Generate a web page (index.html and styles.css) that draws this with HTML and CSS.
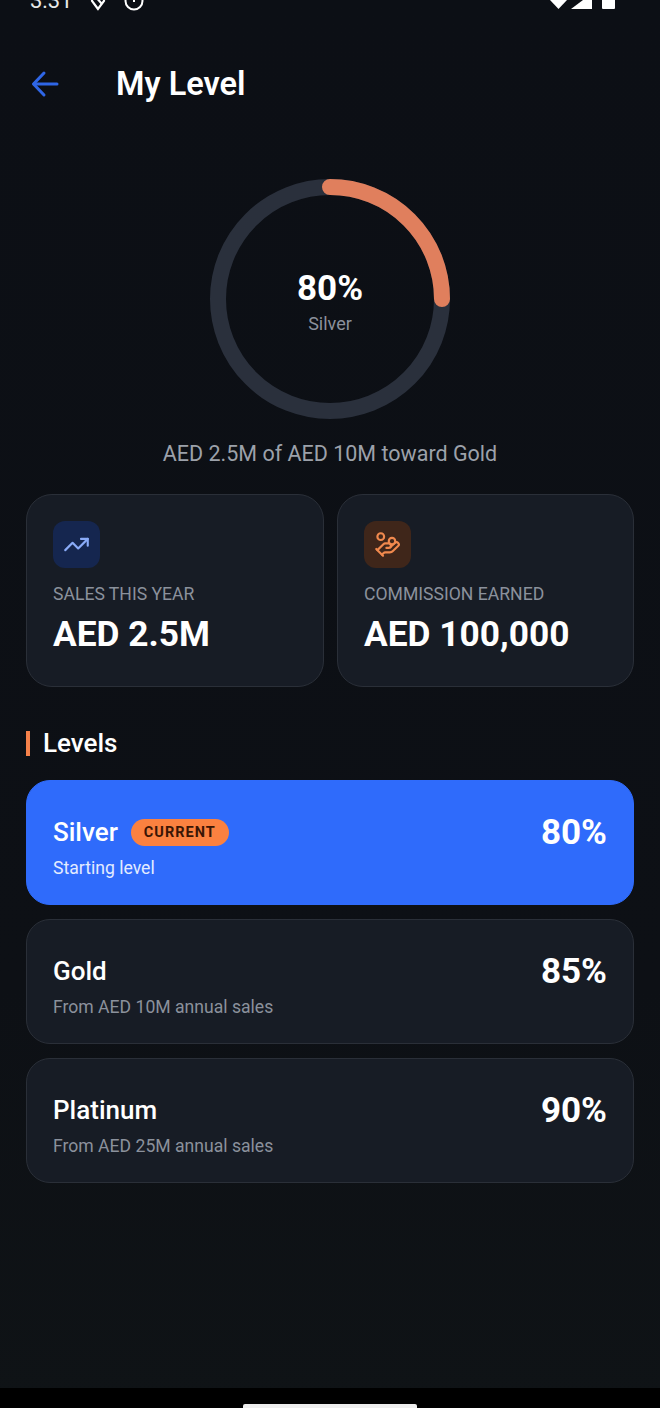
FILE: index.html
```html
<!DOCTYPE html>
<html lang="en">

<head>
    <meta charset="UTF-8">
    <meta name="viewport" content="width=device-width, initial-scale=1.0">
    <title>My Level</title>
    <link rel="stylesheet" href="styles.css">
</head>

<body>
    <div class="screen">
        <div class="status-bar">
            <div class="status-left">
                <span class="status-time">3:31</span>
                <svg class="status-icon" width="20" height="20" viewBox="0 0 20 20" fill="none" stroke="#fff" stroke-width="2.2">
                    <path d="M10 18 4 10V3h12v7z" />
                    <path d="M6 4l8 9" />
                </svg>
                <svg class="status-icon" width="20" height="20" viewBox="0 0 20 20" fill="none" stroke="#fff" stroke-width="2">
                    <circle cx="10" cy="10" r="8.5" />
                    <path d="M10 6v5" />
                </svg>
            </div>
            <div class="status-right">
                <svg width="17" height="14" viewBox="0 0 17 14"><path d="M0 0h17L8.500 9z" fill="#fff" /></svg>
                <svg class="status-cell" width="21" height="14" viewBox="0 0 21 14"><path d="M21 0v9H0L12 0z" fill="#fff" /></svg>
                <svg class="status-battery" width="13" height="14" viewBox="0 0 13 14"><path d="M0 0h13v8a1 1 0 0 1-1 1H1a1 1 0 0 1-1-1z" fill="#fff" /></svg>
            </div>
        </div>

        <header class="top-bar">
            <svg class="back-icon" width="28" height="28" viewBox="0 0 28 28" fill="none" stroke="#2f66e6" stroke-width="3" stroke-linecap="round" stroke-linejoin="round">
                <path d="M26 14H3" />
                <path d="M13 3 2.500 14 13 25" />
            </svg>
            <h1 class="page-title">My Level</h1>
        </header>

        <section class="progress">
            <div class="ring">
                <svg width="240" height="240" viewBox="0 0 240 240" fill="none" stroke-width="16">
                    <circle cx="120" cy="120" r="112" stroke="#2a303c" />
                    <path d="M120 8A112 112 0 0 1 232 120" stroke="#e07f5d" stroke-linecap="round" />
                </svg>
                <div class="ring-label">
                    <div class="ring-value">80%</div>
                    <div class="ring-name">Silver</div>
                </div>
            </div>
            <p class="progress-note">AED 2.5M of AED 10M toward Gold</p>
        </section>

        <section class="stats">
            <div class="stat-card">
                <div class="stat-icon stat-icon-blue">
                    <svg width="27" height="27" viewBox="0 0 24 24" fill="none" stroke="#8aabf8" stroke-width="1.900" stroke-linecap="round" stroke-linejoin="round">
                        <path d="M22 7l-8.500 8.500-5-5L2 17" />
                        <path d="M16 7h6v6" />
                    </svg>
                </div>
                <div class="stat-label">SALES THIS YEAR</div>
                <div class="stat-value">AED 2.5M</div>
            </div>
            <div class="stat-card">
                <div class="stat-icon stat-icon-orange">
                    <svg width="27" height="27" viewBox="0 0 24 24" fill="none" stroke="#f0894e" stroke-width="1.900" stroke-linecap="round" stroke-linejoin="round">
                        <path d="M11 15h2a2 2 0 1 0 0-4h-3c-.6 0-1.100.2-1.400.6L3 17" />
                        <path d="m7 21 1.600-1.400c.3-.4.8-.6 1.400-.6h4c1.100 0 2.100-.4 2.800-1.200l4.600-4.400a2 2 0 0 0-2.750-2.910l-4.200 3.900" />
                        <path d="m2 16 6 6" />
                        <circle cx="16" cy="9" r="2.900" />
                        <circle cx="6" cy="5" r="3" />
                    </svg>
                </div>
                <div class="stat-label">COMMISSION EARNED</div>
                <div class="stat-value">AED 100,000</div>
            </div>
        </section>

        <h2 class="section-title">Levels</h2>

        <section class="levels">
            <div class="level-card level-current">
                <div>
                    <div class="level-head">
                        <span class="level-name">Silver</span>
                        <span class="level-badge">CURRENT</span>
                    </div>
                    <div class="level-desc">Starting level</div>
                </div>
                <div class="level-rate">80%</div>
            </div>
            <div class="level-card">
                <div>
                    <div class="level-head">
                        <span class="level-name">Gold</span>
                    </div>
                    <div class="level-desc">From AED 10M annual sales</div>
                </div>
                <div class="level-rate">85%</div>
            </div>
            <div class="level-card">
                <div>
                    <div class="level-head">
                        <span class="level-name">Platinum</span>
                    </div>
                    <div class="level-desc">From AED 25M annual sales</div>
                </div>
                <div class="level-rate">90%</div>
            </div>
        </section>

        <div class="nav-bar">
            <div class="nav-pill"></div>
        </div>
    </div>
</body>

</html>
```

FILE: styles.css
```css
* {
    box-sizing: border-box;
}

html,
body {
    margin: 0;
    padding: 0;
}

body {
    font-family: Roboto, "Liberation Sans", sans-serif;
    background-color: #000;
    color: #fff;
}

.screen {
    display: flex;
    flex-direction: column;
    width: 660px;
    height: 1408px;
    overflow: hidden;
    background: linear-gradient(#0c0f15, #0d1015 70%, #0f1316);
}

/* status bar is cut off by the top of the picture */
.status-bar {
    display: flex;
    flex: none;
    justify-content: space-between;
    align-items: flex-end;
    height: 10px;
    padding: 0 45px 0 30px;
}

.status-left {
    display: flex;
    align-items: flex-end;
    gap: 16px;
}

.status-time {
    font-size: 22px;
    line-height: 20px;
    margin-bottom: -1px;
    color: #e8e8e8;
}

.status-icon {
    margin-bottom: -1px;
}

.status-right {
    display: flex;
    align-items: flex-start;
    height: 9px;
    margin-bottom: 1px;
}

.status-cell {
    margin-left: 4px;
}

.status-battery {
    margin-left: 10px;
}

.top-bar {
    display: flex;
    flex: none;
    align-items: center;
    height: 148px;
    padding: 0 0 0 31px;
}

.back-icon {
    flex: none;
}

.page-title {
    margin: 0 0 0 57px;
    font-size: 32.500px;
    font-weight: 600;
    line-height: 36px;
}

.progress {
    display: flex;
    flex: none;
    flex-direction: column;
    align-items: center;
    margin-top: 21px;
}

.ring {
    position: relative;
    width: 240px;
    height: 240px;
}

.ring svg {
    display: block;
}

.ring-label {
    position: absolute;
    inset: 0;
    display: flex;
    flex-direction: column;
    align-items: center;
    justify-content: center;
    padding-top: 4px;
}

.ring-value {
    font-size: 35px;
    font-weight: 700;
    line-height: 40px;
}

.ring-name {
    margin-top: 5px;
    font-size: 18px;
    line-height: 20px;
    color: #8b919c;
}

.progress-note {
    margin: 23px 0 0;
    font-size: 21.500px;
    line-height: 24px;
    color: #9ca1aa;
}

.stats {
    display: grid;
    flex: none;
    grid-template-columns: 298px 297px;
    gap: 13px;
    margin: 28px 26px 0;
}

.stat-card {
    height: 193px;
    padding: 26px;
    background-color: #171c25;
    border: 1px solid #2a2f38;
    border-radius: 26px;
}

.stat-icon {
    display: flex;
    align-items: center;
    justify-content: center;
    width: 47px;
    height: 47px;
    border-radius: 12px;
}

.stat-icon-blue {
    background-color: #15264f;
}

.stat-icon-orange {
    background-color: #3f261a;
}

.stat-label {
    margin-top: 15px;
    font-size: 17.600px;
    line-height: 22px;
    color: #8b919c;
}

.stat-value {
    margin-top: 9px;
    font-size: 35.300px;
    font-weight: 700;
    line-height: 40px;
}

.section-title {
    flex: none;
    height: 25px;
    margin: 44px 26px 0;
    padding-left: 13px;
    border-left: 4px solid #f5814a;
    font-size: 26px;
    font-weight: 500;
    line-height: 25px;
}

.levels {
    display: flex;
    flex: none;
    flex-direction: column;
    gap: 14px;
    margin: 24px 26px 0;
}

.level-card {
    display: flex;
    justify-content: space-between;
    height: 125px;
    padding: 33px 26px 0;
    background-color: #171c25;
    border: 1px solid #2a2f38;
    border-radius: 24px;
}

.level-current {
    background-color: #2f6bfb;
    border-color: #2f6bfb;
}

.level-head {
    display: flex;
    align-items: center;
    gap: 13px;
    height: 36px;
}

.level-name {
    font-size: 26px;
    font-weight: 500;
}

.level-badge {
    padding: 0 13px;
    font-size: 14.500px;
    font-weight: 700;
    line-height: 27px;
    letter-spacing: 1px;
    color: #3a1505;
    background-color: #fb8140;
    border-radius: 14px;
}

.level-desc {
    margin-top: 7px;
    font-size: 17.600px;
    line-height: 22px;
    color: #8b919c;
}

.level-current .level-desc {
    color: #e3ebff;
}

.level-rate {
    margin-top: -1px;
    font-size: 35px;
    font-weight: 700;
    line-height: 40px;
}

.nav-bar {
    display: flex;
    flex: none;
    justify-content: center;
    align-items: flex-end;
    height: 20px;
    margin-top: auto;
    background-color: #000;
}

.nav-pill {
    width: 174px;
    height: 4px;
    background-color: #eee;
    border-radius: 2px 2px 0 0;
}
```
